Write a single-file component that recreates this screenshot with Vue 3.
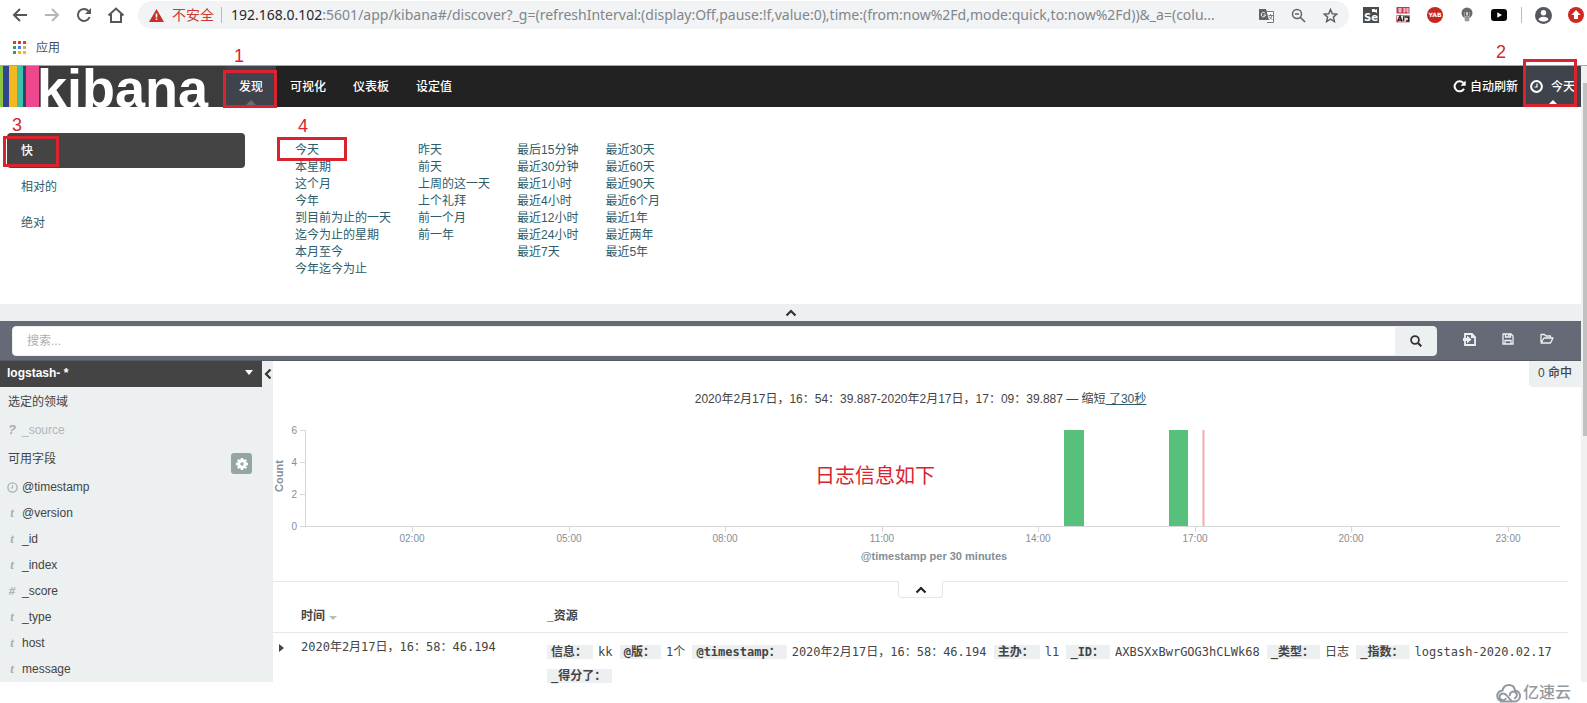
<script setup>
import { ref } from 'vue'

const query = ref('')
const tabs = ['可视化', '仪表板', '设定值']
const ranges = [
  ['今天', '本星期', '这个月', '今年', '到目前为止的一天', '迄今为止的星期', '本月至今', '今年迄今为止'],
  ['昨天', '前天', '上周的这一天', '上个礼拜', '前一个月', '前一年'],
  ['最后15分钟', '最近30分钟', '最近1小时', '最近4小时', '最近12小时', '最近24小时', '最近7天'],
  ['最近30天', '最近60天', '最近90天', '最近6个月', '最近1年', '最近两年', '最近5年']
]
const fields = [
  { kind: 'clock', name: '@timestamp' },
  { kind: 't', name: '@version' },
  { kind: 't', name: '_id' },
  { kind: 't', name: '_index' },
  { kind: '#', name: '_score' },
  { kind: 't', name: '_type' },
  { kind: 't', name: 'host' },
  { kind: 't', name: 'message' }
]
const yTicks = [6, 4, 2, 0].map((v, i) => ({ v, y: 15 + i * 32 }))
const xTicks = ['02:00', '05:00', '08:00', '11:00', '14:00', '17:00', '20:00', '23:00']
  .map((t, i) => ({ t, x: 139 + Math.round(i * 156.5) }))
const source = [
  ['信息：', 'kk'],
  ['@版：', '1个'],
  ['@timestamp：', '2020年2月17日，16：58：46.194'],
  ['主办：', 'l1'],
  ['_ID：', 'AXBSXxBwrGOG3hCLWk68'],
  ['_类型：', '日志'],
  ['_指数：', 'logstash-2020.02.17'],
  ['_得分了：', '']
]
const appColors = ['#d93a32', '#d93a32', '#d93a32', '#3b9a57', '#3f82e0', '#eda63a', '#3b9a57', '#e8b92e', '#e8b92e']
</script>

<template>
  <div class="window">
    <header class="chrome">
      <div class="toolbar">
        <button class="tool" aria-label="后退"><svg width="16" height="16" viewBox="0 0 16 16"><path d="M15 8H2M8 2L2 8l6 6" fill="none" stroke="#54575b" stroke-width="2" /></svg></button>
        <button class="tool" aria-label="前进"><svg width="16" height="16" viewBox="0 0 16 16"><path d="M1 8h13M8 2l6 6-6 6" fill="none" stroke="#b4b6b8" stroke-width="2" /></svg></button>
        <button class="tool" aria-label="重新加载"><svg width="16" height="16" viewBox="0 0 16 16"><path d="M13.6 10A6 6 0 1 1 12.4 3.9" fill="none" stroke="#54575b" stroke-width="2" /><path d="M15 1v6H9z" fill="#54575b" /></svg></button>
        <button class="tool" aria-label="主页"><svg width="18" height="16" viewBox="0 0 18 16"><path d="M1.5 8.5L9 1.5l7.500 7M4 7v8h10V7" fill="none" stroke="#54575b" stroke-width="2" /></svg></button>
        <div class="omnibox">
          <svg width="15" height="13" viewBox="0 0 15 13"><path d="M7.500 0L15 13H0z" fill="#c5302a" /><path d="M6.700 4.500h1.600v4H6.700zM6.700 9.500h1.600V11H6.700z" fill="#fff" /></svg>
          <span class="insecure">不安全</span>
          <span class="bar"></span>
          <div class="url"><b>192.168.0.102</b>:5601/app/kibana#/discover?_g=(refreshInterval:(display:Off,pause:!f,value:0),time:(from:now%2Fd,mode:quick,to:now%2Fd))&amp;_a=(colu...</div>
          <button class="tool" aria-label="翻译"><svg width="15" height="15" viewBox="0 0 15 15"><path d="M6 3.500h8.500v11H8" fill="#fff" stroke="#777a7e" /><path d="M0 1h7l3 11H1a1 1 0 0 1-1-1z" fill="#5f6368" /><path d="M6.200 5.300A2.200 2.200 0 1 0 6.600 7H4.600" fill="none" stroke="#fff" /><path d="M9.500 7.500H14M11.700 6v1.500M13 7.500c-.5 2-1.500 3-2.500 4M10.500 8.500c.5 1.500 1.500 2.500 3 3" stroke="#777a7e" fill="none" /></svg></button>
          <button class="tool" aria-label="缩放"><svg width="15" height="15" viewBox="0 0 15 15"><circle cx="6" cy="6" r="4.500" fill="none" stroke="#5f6368" stroke-width="1.500" /><path d="M9.500 9.500l4.500 4.500M4 6h4" stroke="#5f6368" stroke-width="1.600" /></svg></button>
          <button class="tool" aria-label="收藏"><svg width="15" height="15" viewBox="0 0 15 15"><path d="M7.500 1.500l1.800 4.200 4.500.4-3.400 3 1 4.500-3.900-2.400-3.900 2.400 1-4.500-3.400-3 4.500-.4z" fill="none" stroke="#5f6368" stroke-width="1.500" /></svg></button>
        </div>
        <div class="extensions">
          <svg width="16" height="16" viewBox="0 0 16 16"><path d="M0 0h16v16H0z" fill="#4b4b4b" /><path d="M9 2h3v1l2-1v4l-2-1H9z" fill="#fff" /><text x="1" y="14" class="ext-se">Se</text></svg>
          <svg width="16" height="16" viewBox="-1 0 16 16"><path d="M.5 0h13v6.500H.5z" fill="#c7344b" /><path d="M2 2h4M4 1v5M2 4h4M8 1v5M8 2h4M8 4h4M12 1v5" stroke="#fff" stroke-width=".8" /><path d="M.5 8.500h13V15H.5z" fill="#f6dfe1" stroke="#d77" /><path d="M1.500 14.500L4 9l2 5.500M2.500 13h3M8 9l-.5 5M9 10h3.500v4H10" fill="none" stroke="#222" stroke-width="1.400" /></svg>
          <svg width="16" height="16" viewBox="0 0 16 16"><circle cx="8" cy="8" r="8" fill="#c5271f" /><text x="8" y="10" class="ext-yab">YAB</text></svg>
          <svg width="16" height="16" viewBox="-2 0 16 16"><circle cx="6" cy="6" r="5.500" fill="#6a6a6a" /><path d="M3.500 5h5v9.500h-5z" fill="#c9c9c9" /><path d="M4.500 4v5h3V4M4 11h4M4 13h4" fill="none" stroke="#666" /></svg>
          <svg width="16" height="12" viewBox="0 0 16 12"><rect width="16" height="12" rx="3" fill="#050505" /><path d="M6.300 3.300v5.400L11 6z" fill="#fff" /></svg>
          <span class="bar"></span>
          <svg width="17" height="17" viewBox="0 0 17 17"><circle cx="8.500" cy="8.500" r="8.500" fill="#54585d" /><circle cx="8.500" cy="5.800" r="2.700" fill="#fff" /><path d="M3.500 12.500c1-3.600 9-3.600 10 0-2.500 2.800-7.500 2.800-10 0z" fill="#fff" /></svg>
          <svg width="16" height="16" viewBox="0 0 16 16"><circle cx="8" cy="8" r="8" fill="#cf2a22" /><path d="M8 3l4.500 5H10v4H6V8H3.500z" fill="#fff" /></svg>
        </div>
      </div>
      <div class="bookmarks">
        <svg width="13" height="13" viewBox="0 0 13 13"><rect v-for="(c, i) in appColors" :key="i" :x="(i % 3) * 5" :y="Math.floor(i / 3) * 5" width="3" height="3" :fill="c" /></svg>
        <a href="#">应用</a>
      </div>
    </header>

    <div class="viewport">
      <div class="page">
        <nav class="navbar">
          <a class="logo" href="#" aria-label="kibana">
            <svg width="39" height="41" viewBox="0 0 39 41" shape-rendering="crispEdges"><path d="M0 0h3v41H0z" fill="#8cc540" /><path d="M3 0h6v41H3z" fill="#30478f" /><path d="M9 0h8v41H9z" fill="#f3b81d" /><path d="M17 0h6v41h-6z" fill="#3ebfa9" /><path d="M23 0h3v41h-3z" fill="#264a68" /><path d="M26 0h13v41H26z" fill="#ee478d" /></svg>
            <span>kibana</span>
          </a>
          <a class="tab current" href="#">发现<i></i></a>
          <a v-for="t in tabs" :key="t" class="tab" href="#">{{ t }}</a>
          <div class="nav-right">
            <button class="refresh"><svg width="13" height="13" viewBox="0 0 13 13"><path d="M11 8.700A5 5 0 1 1 10.300 3" fill="none" stroke="#fff" stroke-width="2" /><path d="M12.700.5v5.200H7.500z" fill="#fff" /></svg>自动刷新</button>
            <button class="today"><svg width="13" height="13" viewBox="0 0 13 13"><circle cx="6.500" cy="6.500" r="5.400" fill="none" stroke="#fff" stroke-width="2" /><path d="M7 3.500V7H4.500" fill="none" stroke="#fff" stroke-width="1.200" /></svg>今天<i></i></button>
          </div>
        </nav>

        <section class="picker">
          <div class="modes">
            <button class="mode on">快</button>
            <button class="mode">相对的</button>
            <button class="mode">绝对</button>
          </div>
          <ul v-for="(col, i) in ranges" :key="i" class="range">
            <li v-for="r in col" :key="r"><a href="#">{{ r }}</a></li>
          </ul>
        </section>
        <button class="collapse" aria-label="收起"><svg width="12" height="8" viewBox="0 0 12 8"><path d="M1.500 6.500L6 2l4.500 4.500" fill="none" stroke="#333" stroke-width="2.200" /></svg></button>

        <form class="search" @submit.prevent>
          <div class="search-box">
            <input v-model="query" type="text" placeholder="搜索..." aria-label="搜索">
            <button aria-label="搜索"><svg width="12" height="12" viewBox="0 0 12 12"><circle cx="5" cy="5" r="3.900" fill="none" stroke="#333" stroke-width="1.800" /><path d="M8 8l3.300 3.300" stroke="#333" stroke-width="2.200" /></svg></button>
          </div>
          <button class="action" aria-label="新建"><svg width="13" height="13" viewBox="0 0 13 13"><path d="M2 1h7l3 3v8H2z" fill="none" stroke="#eef1f4" stroke-width="1.800" /><path d="M8 1v4h4zM0 5h4V2.500l4.500 4-4.500 4V8H0z" fill="#eef1f4" /></svg></button>
          <button class="action" aria-label="保存"><svg width="12" height="12" viewBox="0 0 12 12"><path d="M1 1h8l2 2v8H1zM3 11V7.500h6V11M3.500 1v3h5V1" fill="none" stroke="#eef1f4" stroke-width="1.300" /><path d="M6 1h1.500v2.500H6z" fill="#eef1f4" /></svg></button>
          <button class="action" aria-label="打开"><svg width="14" height="12" viewBox="0 0 14 12"><path d="M1 9V1.500h3.500L6 3h4.500v2M1 10l3-5h9l-2.500 5z" fill="none" stroke="#eef1f4" stroke-width="1.300" stroke-linejoin="round" /></svg></button>
        </form>

        <div class="discover">
          <aside class="sidebar">
            <div class="index-row">
              <button class="index">logstash- *<i></i></button>
              <button class="fold" aria-label="隐藏侧栏"><svg width="8" height="12" viewBox="0 0 8 12"><path d="M6.500 1.500L2 6l4.500 4.500" fill="none" stroke="#333" stroke-width="2.200" /></svg></button>
            </div>
            <h2>选定的领域</h2>
            <div class="field muted"><span class="kind unknown">?</span>_source</div>
            <h2 class="available">可用字段<button class="gear" aria-label="设置"><svg width="12" height="12" viewBox="0 0 12 12"><circle cx="6" cy="6" r="3.200" fill="none" stroke="#fff" stroke-width="3" /><path d="M6 0v2M6 10v2M0 6h2M10 6h2M1.800 1.800l1.400 1.400M8.800 8.800l1.400 1.400M1.800 10.200l1.400-1.400M8.800 3.200l1.400-1.400" stroke="#fff" stroke-width="2.400" /></svg></button></h2>
            <div v-for="f in fields" :key="f.name" class="field">
              <span class="kind"><svg v-if="f.kind === 'clock'" width="11" height="11" viewBox="0 0 11 11"><circle cx="5.500" cy="5.500" r="4.600" fill="none" stroke="#aab0b3" stroke-width="1.300" /><path d="M5.500 3v3H3.500" fill="none" stroke="#aab0b3" /></svg><template v-else>{{ f.kind }}</template></span>{{ f.name }}
            </div>
          </aside>

          <main class="results">
            <div class="hits">0 命中</div>
            <p class="span">2020年2月17日，16：54：39.887-2020年2月17日，17：09：39.887 — 缩短<a href="#"> 了30秒</a></p>
            <svg class="chart" viewBox="0 0 1308 166">
              <path d="M32.500 15v97M32 111.500h1255" stroke="#d6d8da" fill="none" />
              <g v-for="t in yTicks" :key="t.v">
                <path :d="`M27 ${t.y + 0.5}h6`" stroke="#d6d8da" />
                <text :x="24" :y="t.y + 4" text-anchor="end" class="tick">{{ t.v }}</text>
              </g>
              <g v-for="t in xTicks" :key="t.t">
                <path :d="`M${t.x + 0.5} 112v5`" stroke="#d6d8da" />
                <text :x="t.x" y="127" text-anchor="middle" class="tick">{{ t.t }}</text>
              </g>
              <path d="M791 15h20v96h-20zM896 15h19v96h-19z" fill="#57c17b" />
              <path d="M930.500 15v96" stroke="#f5a8b0" stroke-width="2" />
              <text x="661" y="145" text-anchor="middle" class="axis">@timestamp per 30 minutes</text>
              <text transform="translate(10 61) rotate(-90)" text-anchor="middle" class="axis">Count</text>
              <text x="602" y="68" text-anchor="middle" class="remark">日志信息如下</text>
            </svg>
            <div class="divider"><button aria-label="收起图表"><svg width="12" height="8" viewBox="0 0 12 8"><path d="M1.500 6.500L6 2l4.500 4.500" fill="none" stroke="#222" stroke-width="2.200" /></svg></button></div>
            <table>
              <thead>
                <tr><th class="open"></th><th class="time">时间<i></i></th><th>_资源</th></tr>
              </thead>
              <tbody>
                <tr>
                  <td class="open"><button aria-label="展开"></button></td>
                  <td class="time">2020年2月17日，16：58：46.194</td>
                  <td class="source"><template v-for="s in source" :key="s[0]"><span class="pair"><b>{{ s[0] }}</b>{{ s[1] }}</span>{{ ' ' }}</template></td>
                </tr>
              </tbody>
            </table>
          </main>
        </div>
      </div>
      <div class="scrollbar"><span></span></div>
    </div>

    <footer>
      <svg width="25" height="20" viewBox="0 0 25 20"><path d="M7 18.500a5.500 5.500 0 1 1-.5-11C8 0 18 0 19 7.500a5.500 5.500 0 1 1-1 11c-5 0-6-8-11-8a3.300 3.300 0 1 0 3 4.500M14 13a3.500 3.500 0 1 1 4 2.500M4 18.500h14" fill="none" stroke="#9499a1" stroke-width="2" /></svg>
      <span>亿速云</span>
    </footer>

    <div class="mark box m1"></div><div class="mark num n1">1</div>
    <div class="mark box m2"></div><div class="mark num n2">2</div>
    <div class="mark box m3"></div><div class="mark num n3">3</div>
    <div class="mark box m4"></div><div class="mark num n4">4</div>
  </div>
</template>

<style>
body { background: #fff; }
</style>

<style scoped>
* { box-sizing: border-box; }
.window {
  position: relative;
  font: 12px/18px "Liberation Sans", "Noto Sans CJK SC", sans-serif;
  color: #444;
}
button { border: 0; padding: 0; margin: 0; background: none; font: inherit; color: inherit; cursor: pointer; }
a { color: inherit; text-decoration: none; }
svg { display: block; flex: none; }

.chrome { border-bottom: 1px solid #a5a5a5; }
.toolbar { display: flex; align-items: center; height: 30px; padding-left: 12px; gap: 16px; }
.tool { display: flex; justify-content: center; width: 16px; }
.omnibox { display: flex; align-items: center; flex: 1; min-width: 0; height: 28px; margin-left: -2px; padding: 0 11px; border-radius: 14px; background: #f1f3f4; white-space: nowrap; }
.insecure { margin-left: 8px; font-size: 14px; color: #cc3a32; }
.bar { width: 1px; height: 16px; margin: 0 9px 0 7px; background: #b9bcbf; }
.url { flex: 1; min-width: 0; font: 14px/22px "Noto Sans", sans-serif; color: #80868b; }
.url b { font-weight: normal; color: #26282b; }
.omnibox .tool + .tool { margin-left: 16px; }
.extensions { display: flex; align-items: center; gap: 16px; padding-right: 3px; margin-left: -2px; }
.extensions .bar { margin: 0 -3px 0 -2px; }
.ext-se { font: bold 10px "DejaVu Sans", sans-serif; fill: #fff; }
.ext-yab { font: bold 6px "DejaVu Sans", sans-serif; fill: #fff; text-anchor: middle; }
.bookmarks { display: flex; align-items: center; gap: 10px; height: 35px; padding-left: 13px; color: #4a4d50; }

.viewport { display: flex; }
.page { flex: 1; min-width: 0; }
.scrollbar { width: 6px; padding: 17px 0 0 2px; background: #f1f1f1; }
.scrollbar span { display: block; height: 353px; background: #c1c1c1; }

.navbar { display: flex; height: 41px; background: #222; color: #fff; font-weight: 500; }
.logo { display: flex; width: 225px; background: #3c3c3c; }
.logo span { margin-left: -2px; font: bold 54px/44px "Liberation Sans", Arial, sans-serif; }
.tab { position: relative; display: flex; align-items: center; padding: 0 13px 0 14px; }
.current, .today { background: #3f444c; }
.tab i, .today i { position: absolute; left: 50%; bottom: 2px; margin-left: -5px; border: 5px solid transparent; border-top: 0; border-bottom-color: #6b6e73; }
.nav-right { display: flex; margin-left: auto; }
.refresh, .today { display: flex; align-items: center; gap: 4px; }
.refresh { margin-right: 7px; }
.today { position: relative; gap: 8px; padding: 0 6px 0 5px; }
.today i { border-bottom-color: #fff; }

.picker { display: flex; align-items: flex-start; gap: 27px; height: 197px; padding: 26px 7px 0; color: #2d5c6b; }
.modes { display: flex; flex-direction: column; gap: 1px; width: 238px; margin-right: 23px; }
.mode { height: 35px; padding: 0 14px; border-radius: 4px; text-align: left; }
.on { background: #444; color: #fff; font-weight: 500; }
.range { margin: 9px 0 0; padding: 0; list-style: none; line-height: 17px; white-space: nowrap; }
.collapse { display: flex; align-items: center; justify-content: center; width: 100%; height: 17px; background: #ecf0f1; }

.search { display: flex; align-items: flex-start; height: 40px; padding: 5px 26px 0 12px; background: #656a76; border-bottom: 1px solid #575b66; }
.search-box { display: flex; flex: 1; height: 30px; margin-right: 24px; border: 1px solid #ecf0f1; border-radius: 4px; background: #ecf0f1; overflow: hidden; }
.search-box input { flex: 1; border: 0; padding: 0 14px; background: #fff; font: inherit; color: #444; outline: 0; }
.search-box input::placeholder { color: #a9b0b4; }
.search-box button { display: flex; align-items: center; justify-content: center; width: 41px; }
.action { display: flex; align-items: center; justify-content: center; width: 16px; height: 26px; margin-left: 23px; }
.action:first-of-type { margin-left: 0; }

.discover { display: flex; }
.sidebar { width: 273px; background: #ecf0f1; }
.index-row { display: flex; height: 26px; }
.index { display: flex; align-items: center; justify-content: space-between; flex: 1; padding: 0 9px 2px 7px; background: #444; color: #fff; font-weight: bold; }
.index i { border: 4px solid transparent; border-bottom: 0; border-top-color: #fff; border-top-width: 5px; margin-bottom: 2px; }
.fold { display: flex; align-items: center; justify-content: center; width: 11px; }
h2 { margin: 0; padding: 0 8px; font-size: 12px; font-weight: normal; line-height: 30px; }
.field { display: flex; align-items: center; height: 26px; }
.muted { color: #b0b6ba; }
.kind { display: flex; justify-content: center; width: 14px; margin: 0 3px 0 5px; font: italic bold 13px/18px "Liberation Serif", serif; color: #a9aeb1; }
.unknown { font-family: "Liberation Sans", sans-serif; }
.available { display: flex; align-items: flex-start; justify-content: space-between; height: 31px; padding: 0 21px 0 8px; line-height: 32px; }
.gear { display: flex; align-items: center; justify-content: center; width: 21px; height: 21px; margin-top: 10px; border-radius: 3px; background: #95a5a6; }

.results { position: relative; flex: 1; min-width: 0; }
.hits { position: absolute; top: 0; right: 0; padding: 3px 9px 5px; border-radius: 0 0 0 4px; background: #ecf0f1; font-weight: 500; }
.span { margin: 0; padding: 29px 13px 7px 0; text-align: center; white-space: nowrap; }
.span a { color: #2d5c6b; text-decoration: underline; }
.chart { width: 100%; height: auto; font-family: "Liberation Sans", "Noto Sans CJK SC", sans-serif; }
.tick { font-size: 10px; fill: #848e96; }
.axis { font-size: 11px; font-weight: bold; fill: #848e96; }
.remark { font-size: 20px; fill: #d9232e; }
.divider { display: flex; justify-content: center; height: 17px; margin-right: 13px; border-top: 1px solid #e6e8ea; }
.divider button { display: flex; align-items: center; justify-content: center; width: 45px; height: 17px; margin-top: -1px; border: 1px solid #e3e6e8; border-top-color: #fff; border-radius: 0 0 4px 4px; background: #fff; }
table { width: calc(100% - 13px); margin-bottom: -8px; border-collapse: collapse; table-layout: fixed; }
th { height: 34px; padding: 2px 0 0; text-align: left; }
th.open { width: 28px; }
th.time { width: 246px; }
th i { display: inline-block; margin-left: 4px; border: 4px solid transparent; border-bottom: 0; border-top-color: #b8bdc0; }
td { padding: 5px 0 0; border-top: 1px solid #e6e8ea; vertical-align: top; font-family: "DejaVu Sans Mono", "Noto Sans CJK SC", monospace; }
td.open { padding: 9px 0 0 6px; }
td button { display: block; border: 4px solid transparent; border-left: 5px solid #444; border-right: 0; margin-top: 2px; }
td.source { padding-top: 7px; line-height: 24px; }
.pair { white-space: nowrap; }
.pair b { margin-right: 5px; padding: 0 6px 0 4px; background: linear-gradient(#ecf0f1, #ecf0f1) center / 100% 14px no-repeat; }

footer { display: flex; align-items: center; justify-content: flex-end; gap: 2px; height: 21px; padding-right: 16px; font-size: 16px; font-weight: 500; color: #9499a1; }

.mark { position: absolute; pointer-events: none; color: #d9232e; }
.box { border: 3px solid #d9232e; }
.num { font-size: 18px; line-height: 18px; }
.m1 { left: 223px; top: 70px; width: 54px; height: 38px; }
.m2 { right: 10px; top: 59px; width: 54px; height: 48px; }
.m3 { left: 3px; top: 136px; width: 56px; height: 31px; }
.m4 { left: 277px; top: 137px; width: 70px; height: 24px; }
.n1 { left: 234px; top: 47px; }
.n2 { right: 81px; top: 43px; }
.n3 { left: 12px; top: 116px; }
.n4 { left: 298px; top: 117px; }
</style>
